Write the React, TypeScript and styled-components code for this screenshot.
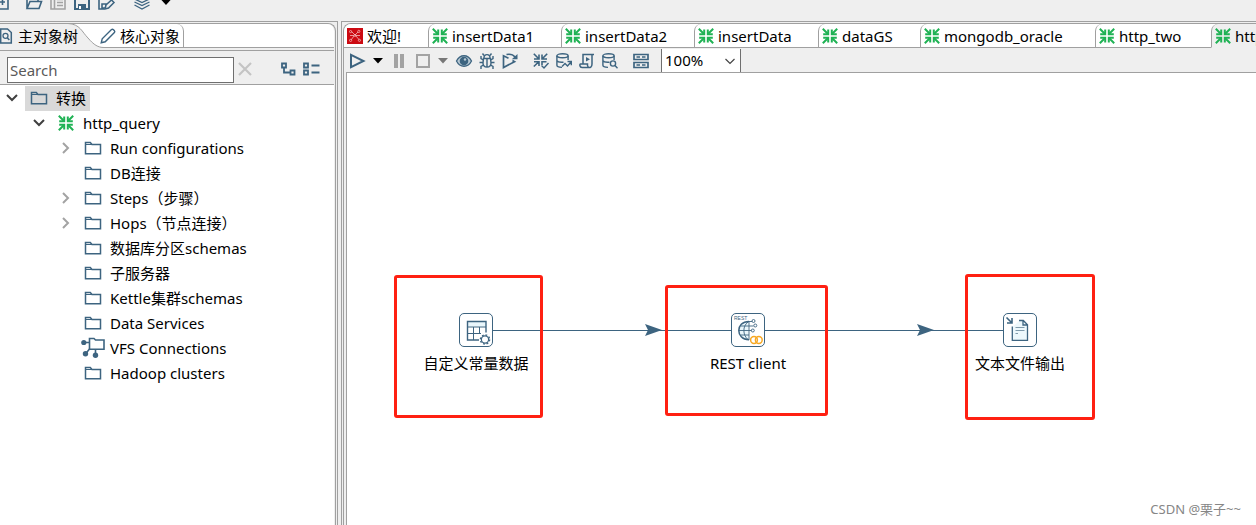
import React from "react";
import styled, { createGlobalStyle, css } from "styled-components";

const INK = "#3d6480";
const GREEN = "#1fb254";
const LINE = "#a0a0a0";
const CHROME = "#efefef";
const MUTED = "#a3a3a3";

const GlobalStyle = createGlobalStyle`
  * { box-sizing: border-box; }
  html, body { margin: 0; background: ${CHROME}; overflow: hidden; }
  body, button, input, select {
    font-family: "Noto Sans", "Noto Sans CJK SC", sans-serif;
    font-size: 15px;
    line-height: 20px;
    color: #000;
  }
  button { padding: 0; border: 0; background: none; }
  svg { display: block; flex: none; overflow: visible; }
`;

/* ---------- layout ---------- */

const Shell = styled.div`
  height: 100vh;
  display: flex;
  flex-direction: column;
`;

const MainToolbar = styled.header`
  flex: none;
  height: 21px;
  display: flex;
  align-items: flex-end;
  gap: 8px;
  padding-bottom: 11px;
`;

const Body = styled.div`
  flex: 1;
  min-height: 0;
  display: grid;
  grid-template-columns: 338px minmax(0, 1fr);
  column-gap: 3px;
`;

const frame = css`
  display: flex;
  flex-direction: column;
  min-width: 0;
  min-height: 0;
`;

const Sidebar = styled.aside`
  ${frame}
  border: solid ${LINE};
  border-width: 1px 1px 0 0;
  padding: 1px 1px 0 0;
`;

const SidebarInner = styled.div`
  ${frame}
  flex: 1;
  border: solid ${LINE};
  border-width: 1px 1px 0 0;
  border-top-right-radius: 8px;
  padding-right: 1px;
`;

const Workspace = styled.main`
  ${frame}
  border: solid ${LINE};
  border-width: 1px 0 0 1px;
  padding: 1px 0 0 1px;
`;

const WorkspaceInner = styled.div`
  ${frame}
  flex: 1;
  border: solid ${LINE};
  border-width: 1px 0 0 1px;
  border-top-left-radius: 8px;
`;

/* ---------- controls ---------- */

const IconButton = styled.button<{ $gap?: number }>`
  display: flex;
  align-items: center;
  margin-left: ${(p) => p.$gap ?? 0}px;
`;

const SideTabs = styled.div`
  flex: none;
  height: 24px;
  display: flex;
  background: #fff;
  border-bottom: 1px solid ${LINE};
  border-top-right-radius: 7px;
`;

const SideTab = styled.button<{ $active?: boolean }>`
  position: relative;
  display: flex;
  align-items: center;
  gap: 4px;
  ${(p) =>
    p.$active
      ? css`
          height: 24px;
          padding-right: 9px;
          background: linear-gradient(to right, ${CHROME} 68px, transparent 68px);
        `
      : css`
          padding: 0 3px 0 13px;
          border: solid ${LINE};
          border-width: 0 1px 0 0;
          border-top-right-radius: 7px;
        `}
  span { position: relative; }
`;

const Slope = styled.svg`
  position: absolute;
  left: 68px;
  top: 0;
`;

const SearchBar = styled.div`
  flex: none;
  height: 35px;
  margin-top: 2px;
  display: flex;
  align-items: center;
  padding: 5px 14px 0 7px;
  border: solid ${LINE};
  border-width: 1px 0;

  > button { padding-bottom: 2px; }
`;

const SearchInput = styled.input`
  flex: 1;
  min-width: 0;
  height: 26px;
  padding: 0 2px;
  border: 1px solid #6f6f6f;
  border-radius: 0;
  background: #fff;
  outline: 0;
  &::placeholder { color: #5a5a5a; opacity: 1; }
`;

const Tree = styled.ul`
  flex: 1;
  min-height: 0;
  margin: 0;
  padding: 1px 0 0;
  list-style: none;
  background: #fff;
  overflow: hidden;
`;

const TreeRow = styled.li<{ $level: number }>`
  height: 25px;
  display: flex;
  align-items: stretch;
  padding-left: ${(p) => 2 + p.$level * 27}px;
`;

const Twisty = styled.button`
  width: 20px;
  margin-right: 3px;
  padding-bottom: 2px;
  display: flex;
  align-items: center;
  justify-content: center;
`;

const TreeLabel = styled.button<{ $selected?: boolean }>`
  display: flex;
  align-items: center;
  padding: 0 4px 2px 5px;
  white-space: nowrap;
  background: ${(p) => (p.$selected ? "#d9d9d9" : "none")};
`;

const TreeIcon = styled.span`
  width: 18px;
  margin-right: 8px;
  display: flex;
  justify-content: center;
`;

const FileTabs = styled.div`
  flex: none;
  height: 24px;
  display: flex;
  overflow: hidden;
  background: #fff;
  border-top-left-radius: 7px;
`;

const FileTab = styled.button<{ $width: number; $active?: boolean }>`
  flex: none;
  width: ${(p) => p.$width}px;
  display: flex;
  align-items: center;
  gap: 4px;
  padding-left: 3px;
  white-space: nowrap;
  border: solid ${LINE};
  border-width: 0 0 1px 1px;
  border-top-left-radius: 7px;
  &:first-child { border-left-width: 0; }
  ${(p) =>
    p.$active &&
    css`
      background: ${CHROME};
      border-bottom-color: ${CHROME};
    `}
`;

const RunToolbar = styled.div`
  flex: none;
  height: 24px;
  display: flex;
  align-items: center;
  padding: 1px 0 0 5px;
`;

const ZoomBox = styled.label`
  position: relative;
  align-self: stretch;
  width: 80px;
  margin-left: 12px;
  background: #fff;
  border: solid #6f6f6f;
  border-width: 0 1px;
`;

const ZoomSelect = styled.select`
  appearance: none;
  width: 100%;
  height: 100%;
  padding: 0 20px 2px 3px;
  border: 0;
  border-radius: 0;
  background: none;
  outline: 0;
`;

const ZoomArrow = styled.svg`
  position: absolute;
  right: 5px;
  top: 9px;
  pointer-events: none;
`;

/* ---------- canvas ---------- */

const Canvas = styled.section`
  position: relative;
  flex: 1;
  min-height: 0;
  margin-left: 2px;
  background: #fff;
  border: solid ${LINE};
  border-width: 1px 0 0 1px;
  overflow: hidden;
`;

const Hops = styled.svg`
  position: absolute;
  inset: 0;
`;

const Step = styled.figure<{ $x: number; $y: number }>`
  position: absolute;
  left: ${(p) => p.$x - 60}px;
  top: ${(p) => p.$y}px;
  width: 154px;
  margin: 0;
  display: flex;
  flex-direction: column;
  align-items: center;
  gap: 6px;
  white-space: nowrap;
`;

const StepBox = styled.div`
  width: 34px;
  height: 34px;
  border: 1px solid ${INK};
  border-radius: 5px;
  background: #fff;
`;

const Marker = styled.div<{ $x: number; $y: number; $w: number; $h: number }>`
  position: absolute;
  left: ${(p) => p.$x}px;
  top: ${(p) => p.$y}px;
  width: ${(p) => p.$w}px;
  height: ${(p) => p.$h}px;
  border: 3px solid #ff2012;
  border-radius: 3px;
`;

const Watermark = styled.div`
  position: absolute;
  right: 15px;
  bottom: 6px;
  font-size: 13px;
  color: #868686;
`;

/* ---------- icons ---------- */

type GlyphProps = { children: React.ReactNode; w?: number; h?: number; color?: string; sw?: number };

const Glyph = ({ children, w = 16, h = 16, color = INK, sw = 1.6 }: GlyphProps) => (
  <svg width={w} height={h} viewBox={`0 0 ${w} ${h}`} fill="none" stroke={color} strokeWidth={sw} aria-hidden="true">
    {children}
  </svg>
);

const FolderIcon = () => (
  <Glyph w={18} h={14} sw={1.5}>
    <path d="M1.5 12.8V1.5H6.3L8 3.5H16.5V12.8Z" />
    <path d="M2 3.5H8" strokeWidth="1" />
  </Glyph>
);

const ArrowsIn = ({ color = GREEN }: { color?: string }) => (
  <Glyph color={color} sw={2}>
    <path d="M0.8 0.8L6 6M15.2 0.8L10 6M0.8 15.2L6 10M15.2 15.2L10 10" />
    <path d="M6.2 1.6V6.2H1.2M9.8 1.6V6.2H14.8M6.2 14.4V9.8H1.2M9.8 14.4V9.8H14.8" />
  </Glyph>
);

const VfsIcon = () => (
  <Glyph w={24} h={21}>
    <path d="M8.5 12.3V1.5H13L14.5 3H23V12.3Z" />
    <path d="M3 5.5H8.5M4 17.5L8.5 12M14.5 12.5V18" />
    <g fill={INK} stroke="none">
      <circle cx="2.8" cy="5.5" r="2.6" />
      <circle cx="4.5" cy="16.8" r="2.7" />
      <circle cx="14.5" cy="18.2" r="2.7" />
    </g>
  </Glyph>
);

const PentahoIcon = () => (
  <svg width="16" height="16" viewBox="0 0 16 16" fill="none" stroke="#f3b6b8" strokeWidth="0.8" aria-hidden="true">
    <path d="M0 0H16V16H0Z" fill="#cc0a12" stroke="none" />
    <path d="M4.5 3.5L8 7L11 4M8 7L12 11.5M7 8L4 12M3 7.5H7M9 7.5H13" />
    <circle cx="3.6" cy="3.6" r="1.1" />
    <circle cx="11.8" cy="3.4" r="1.1" />
    <circle cx="8" cy="7.4" r="1" />
    <circle cx="3.6" cy="12.4" r="1.1" />
    <circle cx="12.4" cy="12.3" r="1.1" />
  </svg>
);

const Caret = ({ color = "#000" }: { color?: string }) => (
  <svg width="10" height="6" viewBox="0 0 10 6" fill={color} aria-hidden="true">
    <path d="M0 0H10L5 5.5Z" />
  </svg>
);

const Cylinder = ({ children }: { children: React.ReactNode }) => (
  <Glyph sw={1.4}>
    <ellipse cx="6.5" cy="2.8" rx="5.6" ry="2" />
    <path d="M0.9 2.8V12.3C0.9 13.4 3 14.3 6 14.4M12.1 2.8V7M0.9 7.5C1.5 8.9 4 9.5 7.5 9.2" />
    {children}
  </Glyph>
);

const ConstantsIcon = () => (
  <Glyph w={32} h={32} sw={1}>
    <path d="M8 7.5H26V12.5H8Z" fill="#e9f6fb" stroke="none" />
    <path d="M19 26H7.5V7.5H26V18.5" strokeWidth="1.4" />
    <path d="M7.5 13H26M7.5 19.5H21M13.5 13V26M19.5 13V20" />
    <circle cx="25" cy="25.5" r="3.6" strokeWidth="1.2" />
    <circle cx="25" cy="25.5" r="4.6" strokeWidth="1.4" strokeDasharray="1.8 1.8" />
  </Glyph>
);

const RestIcon = () => (
  <Glyph w={32} h={32} sw={0.9}>
    <text x="2" y="6" fontSize="5" fontFamily="Liberation Sans, sans-serif" fill={INK} stroke="none">
      REST
    </text>
    <path d="M16.5 7A9.5 9.5 0 0 0 16.5 26Z" fill="#e9f6fb" stroke="none" />
    <path d="M17 7.5C10 7.5 6.8 12 6.8 16.5S10 25.8 17 25.8" strokeWidth="1.5" />
    <path d="M17 7V26M16 8C10.5 12 10.5 21 16 25.5M7 16.5H19.5M8.5 12H17M8.5 21H17" />
    <path d="M15 7.5H20M17 12H21.5" />
    <circle cx="21.5" cy="7" r="1.5" />
    <circle cx="23.3" cy="11.5" r="1.5" />
    <circle cx="20.8" cy="16.5" r="1.5" />
    <g stroke="#f7a823" strokeWidth="1.5">
      <circle cx="22" cy="26" r="3.4" />
      <circle cx="26.8" cy="26" r="3.4" />
    </g>
  </Glyph>
);

const TextFileIcon = () => (
  <Glyph w={32} h={32} sw={1.3}>
    <path d="M8.5 12.5V26H23.5V11L19 6.5H15.5L8.5 13Z" fill="#edf8fc" stroke="none" />
    <path d="M8.3 12.5V26.3H23.5V10.8L19.3 6.5H15M19 6.5V11H23.5" strokeWidth="1.3" />
    <path d="M11.5 13.5H20.5M11.5 16.5H20.5M11.5 19.5H14" stroke="#7f9aab" strokeWidth="1" />
    <path d="M2.5 3.5L7.5 8.5M8 4V9H3" strokeWidth="1.6" />
  </Glyph>
);

/* ---------- data ---------- */

type Node = { label: string; level: number; state?: "open" | "closed"; icon?: "flow" | "vfs"; selected?: boolean };

const TREE: Node[] = [
  { label: "转换", level: 0, state: "open", selected: true },
  { label: "http_query", level: 1, state: "open", icon: "flow" },
  { label: "Run configurations", level: 2, state: "closed" },
  { label: "DB连接", level: 2 },
  { label: "Steps（步骤）", level: 2, state: "closed" },
  { label: "Hops（节点连接）", level: 2, state: "closed" },
  { label: "数据库分区schemas", level: 2 },
  { label: "子服务器", level: 2 },
  { label: "Kettle集群schemas", level: 2 },
  { label: "Data Services", level: 2 },
  { label: "VFS Connections", level: 2, icon: "vfs" },
  { label: "Hadoop clusters", level: 2 },
];

const FILES = [
  { name: "insertData1", width: 133 },
  { name: "insertData2", width: 133 },
  { name: "insertData", width: 124 },
  { name: "dataGS", width: 102 },
  { name: "mongodb_oracle", width: 175 },
  { name: "http_two", width: 116 },
  { name: "http_query", width: 133, active: true },
];

const STEPS = [
  { label: "自定义常量数据", x: 112, y: 240, icon: <ConstantsIcon /> },
  { label: "REST client", x: 384, y: 240, icon: <RestIcon /> },
  { label: "文本文件输出", x: 656, y: 240, icon: <TextFileIcon /> },
];

const MARKERS = [
  { x: 47, y: 202, w: 149, h: 143 },
  { x: 318, y: 212, w: 163, h: 131 },
  { x: 618, y: 201, w: 130, h: 146 },
];

/* ---------- sections ---------- */

const TopBar = () => (
  <MainToolbar>
    <IconButton aria-label="New">
      <Glyph w={10}>
        <path d="M0 15H8V1H0M0 8H5M2.5 5V11" />
      </Glyph>
    </IconButton>
    <IconButton aria-label="Open" $gap={8}>
      <Glyph>
        <path d="M1 14V2H6L8 4H12V7M1 14.5L4 7.5H15.5L13 14.5Z" />
      </Glyph>
    </IconButton>
    <IconButton aria-label="Explore">
      <Glyph color={MUTED}>
        <path d="M1 1H15V15H1ZM4.5 1V15M7 5.5H13M7 8.5H13M7 11.5H13" />
      </Glyph>
    </IconButton>
    <IconButton aria-label="Save">
      <Glyph sw={2}>
        <path d="M1 1H13L15 3V15H1Z" />
        <path d="M4 10H12V15H4Z" fill={INK} stroke="none" />
        <path d="M6 12V15" stroke="#fff" />
      </Glyph>
    </IconButton>
    <IconButton aria-label="Save as">
      <Glyph>
        <path d="M1 1H13V5M1 1V15H6M4 10H8V14H4Z" />
        <path d="M7 15L8 11L13.5 6L16 8.5L10.5 14Z" fill={CHROME} strokeWidth="1.5" />
      </Glyph>
    </IconButton>
    <IconButton aria-label="Perspective" $gap={12}>
      <Glyph sw={1.3}>
        <path d="M0.5 5L8 8.5L15.5 5L8 1.5ZM0.5 8L8 11.5L15.5 8M0.5 11L8 15L15.5 11" />
      </Glyph>
    </IconButton>
    <IconButton aria-label="Perspective menu" $gap={3}>
      <svg width="10" height="11" viewBox="0 0 10 11" aria-hidden="true">
        <path d="M0 0.5H10L5 6Z" />
      </svg>
    </IconButton>
  </MainToolbar>
);

const Explorer = () => (
  <Sidebar>
    <SidebarInner>
      <SideTabs role="tablist">
        <SideTab role="tab" aria-selected="true" $active>
          <Slope width="36" height="24" viewBox="0 0 36 24" fill="none">
            <path d="M0 0C12 0 14 8 20 14C26 21 30 23.5 36 23.5V24H0Z" fill={CHROME} />
            <path d="M0 -0.5C12 0 14 8 20 14C26 21 30 23.5 36 23.5" stroke={LINE} />
          </Slope>
          <Glyph w={14} sw={1.5}>
            <path d="M0 1H7.5L11.3 4.5V15H0M0.7 1V15" />
            <circle cx="5.5" cy="7.8" r="2.5" strokeWidth="1.3" />
            <path d="M7.3 9.7L9.3 12" />
          </Glyph>
          <span>主对象树</span>
        </SideTab>
        <SideTab role="tab" aria-selected="false">
          <Glyph sw={1.4}>
            <path d="M1.2 14.8L2.2 10.8L11.5 1.5Q12.5 0.8 13.5 1.8L14.4 2.7Q15.2 3.7 14.4 4.6L5.2 13.8Z" />
          </Glyph>
          <span>核心对象</span>
        </SideTab>
      </SideTabs>
      <SearchBar>
        <SearchInput aria-label="Search" placeholder="Search" />
        <IconButton aria-label="Clear" $gap={4}>
          <Glyph w={14} h={14} color="#c4c4c4" sw={2.2}>
            <path d="M1 1L13 13M13 1L1 13" />
          </Glyph>
        </IconButton>
        <IconButton aria-label="Expand all" $gap={29}>
          <Glyph w={15} h={14} sw={1.8}>
            <path d="M1 1.5H5V5.5H1ZM9.5 8.5H13.5V12.5H9.5ZM3 6V10.5H9" />
          </Glyph>
        </IconButton>
        <IconButton aria-label="Collapse all" $gap={7}>
          <Glyph w={17} h={14} sw={1.8}>
            <path d="M1 1.5H5V5.5H1ZM1 8.5H5V12.5H1ZM8.5 3.5H16.5M8.5 10.5H16.5" />
          </Glyph>
        </IconButton>
      </SearchBar>
      <Tree>
        {TREE.map((n) => (
          <TreeRow key={n.label} $level={n.level}>
            <Twisty aria-label={n.state ? `Toggle ${n.label}` : undefined} as={n.state ? "button" : "span"}>
              {n.state === "open" && (
                <Glyph w={12} h={8} color="#404040" sw={2}>
                  <path d="M1 1L6 6L11 1" />
                </Glyph>
              )}
              {n.state === "closed" && (
                <Glyph w={8} h={12} color={MUTED} sw={2}>
                  <path d="M1 1L6 6L1 11" />
                </Glyph>
              )}
            </Twisty>
            <TreeLabel $selected={n.selected}>
              <TreeIcon>{n.icon === "flow" ? <ArrowsIn /> : n.icon === "vfs" ? <VfsIcon /> : <FolderIcon />}</TreeIcon>
              {n.label}
            </TreeLabel>
          </TreeRow>
        ))}
      </Tree>
    </SidebarInner>
  </Sidebar>
);

const RunBar = () => (
  <RunToolbar>
    <IconButton aria-label="Run">
      <Glyph sw={2}>
        <path d="M2 1.8L14.5 8L2 14.2Z" />
      </Glyph>
    </IconButton>
    <IconButton aria-label="Run options" $gap={8}>
      <Caret />
    </IconButton>
    <IconButton aria-label="Pause" $gap={11}>
      <Glyph w={10} h={14} color={MUTED} sw={4}>
        <path d="M2 0V14M8 0V14" />
      </Glyph>
    </IconButton>
    <IconButton aria-label="Stop" $gap={12}>
      <Glyph w={14} h={14} color={MUTED} sw={2}>
        <path d="M1 1H13V13H1Z" />
      </Glyph>
    </IconButton>
    <IconButton aria-label="Stop options" $gap={8}>
      <Caret color="#777" />
    </IconButton>
    <IconButton aria-label="Preview" $gap={8}>
      <Glyph>
        <path d="M0.5 8C4 1 12 1 15.5 8C12 15 4 15 0.5 8Z" fill="#b9cad5" strokeWidth="1.3" />
        <circle cx="8" cy="8" r="4.3" fill={INK} stroke="none" />
        <circle cx="9" cy="6.5" r="1.2" fill="#b9cad5" stroke="none" />
      </Glyph>
    </IconButton>
    <IconButton aria-label="Debug" $gap={7}>
      <Glyph sw={1.4}>
        <path d="M5 5C5 0.5 11 0.5 11 5M4.5 5.5H11.5L12 10C12 15.5 4 15.5 4 10ZM8 6V14" />
        <path d="M5 2.5L3.5 0.5M11 2.5L12.5 0.5M4 9.5H0.5M12 9.5H15.5M4.3 7L2 5.5V3M11.7 7L14 5.5V3M4.5 12L2 13.5V16M11.5 12L14 13.5V16" />
      </Glyph>
    </IconButton>
    <IconButton aria-label="Replay" $gap={7}>
      <Glyph sw={1.7}>
        <path d="M6.5 5.2L1.5 2.8V14.5L12.5 8.7L10.5 7.6" />
        <path d="M4.5 1.5C8 0.8 11 1.5 13 4" strokeWidth="1.5" />
        <path d="M15.5 1V6.2H9.8Z" fill={INK} stroke="none" />
      </Glyph>
    </IconButton>
    <IconButton aria-label="Verify" $gap={15}>
      <Glyph sw={1.6}>
        <path d="M0.8 0.8L5.5 5.5M14.2 0.8L9.5 5.5M0.8 13.5L5.5 9M6 1.5V6H1M9 1.5V6H14M6 13V8.8H1M9 12V8.8H13.5" />
        <path d="M8.5 12.5L11 15L15.5 10" strokeWidth="1.4" />
      </Glyph>
    </IconButton>
    <IconButton aria-label="Impact" $gap={7}>
      <Cylinder>
        <path d="M6 13.5L9 10.5L11.5 13L15 9M11.5 8.5H15.3V12.3" />
      </Cylinder>
    </IconButton>
    <IconButton aria-label="Generate SQL" $gap={7}>
      <Glyph sw={1.5}>
        <path d="M4 10.5V1.5H15M13 1.5V11C13 15 10.5 14.5 9.5 14.5H3C0.5 14.5 0.5 11 1.5 11H8.5V12.5C8.8 14.5 10 14.5 10.5 14.5" />
        <path d="M7 4L11 6.3L7 8.6Z" fill={INK} stroke="none" />
      </Glyph>
    </IconButton>
    <IconButton aria-label="Explore database" $gap={7}>
      <Cylinder>
        <circle cx="11" cy="10.5" r="2.6" />
        <path d="M13 12.5L15.5 15.3" />
      </Cylinder>
    </IconButton>
    <IconButton aria-label="Show results" $gap={15}>
      <Glyph sw={1.7}>
        <path d="M1 1.5H15V6.5H1ZM1 9.5H15V14.5H1ZM3.5 4H7M9 4H12.5M3.5 12H7M9 12H12.5" />
      </Glyph>
    </IconButton>
    <ZoomBox>
      <ZoomSelect aria-label="Zoom" defaultValue="100%">
        <option>200%</option>
        <option>100%</option>
        <option>50%</option>
      </ZoomSelect>
      <ZoomArrow width="10" height="7" viewBox="0 0 10 7" fill="none" stroke="#444" strokeWidth="1.2">
        <path d="M0.5 1L5 5.5L9.5 1" />
      </ZoomArrow>
    </ZoomBox>
  </RunToolbar>
);

const FlowCanvas = () => (
  <Canvas>
    <Hops width="100%" height="100%" aria-hidden="true">
      <g stroke={INK} fill={INK}>
        <path d="M146 257.5H384M418 257.5H656" />
        <path d="M298 251L315 257L298 263L301 257ZM570 251L587 257L570 263L573 257Z" stroke="none" />
      </g>
    </Hops>
    {STEPS.map((s) => (
      <Step key={s.label} $x={s.x} $y={s.y}>
        <StepBox>{s.icon}</StepBox>
        <figcaption>{s.label}</figcaption>
      </Step>
    ))}
    {MARKERS.map((m) => (
      <Marker key={m.x} $x={m.x} $y={m.y} $w={m.w} $h={m.h} />
    ))}
    <Watermark>CSDN @栗子~~</Watermark>
  </Canvas>
);

export default function App() {
  return (
    <Shell>
      <GlobalStyle />
      <TopBar />
      <Body>
        <Explorer />
        <Workspace>
          <WorkspaceInner>
            <FileTabs role="tablist">
              <FileTab role="tab" $width={84}>
                <PentahoIcon />
                欢迎!
              </FileTab>
              {FILES.map((f) => (
                <FileTab key={f.name} role="tab" aria-selected={!!f.active} $width={f.width} $active={f.active}>
                  <ArrowsIn />
                  {f.name}
                </FileTab>
              ))}
            </FileTabs>
            <RunBar />
            <FlowCanvas />
          </WorkspaceInner>
        </Workspace>
      </Body>
    </Shell>
  );
}
